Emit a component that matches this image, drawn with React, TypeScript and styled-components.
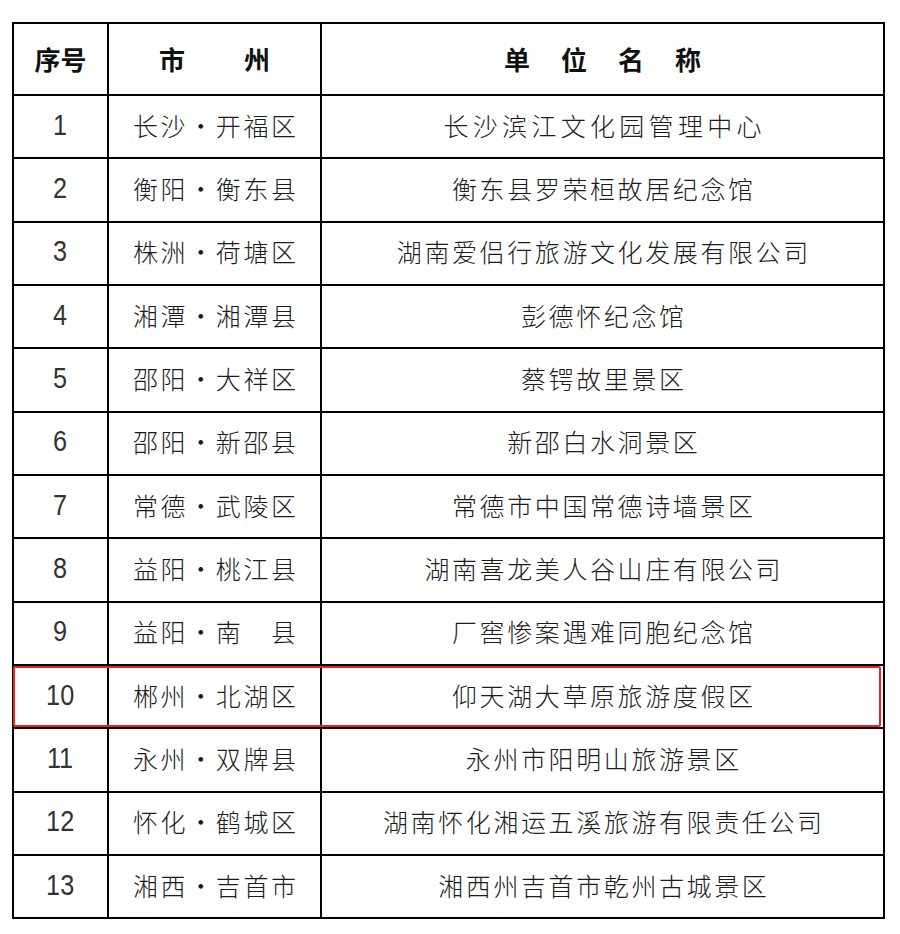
import { styled, createGlobalStyle } from "styled-components";

const rows = [
  { no: "1", city: "长沙·开福区", name: "长沙滨江文化园管理中心", wide: true },
  { no: "2", city: "衡阳·衡东县", name: "衡东县罗荣桓故居纪念馆" },
  { no: "3", city: "株洲·荷塘区", name: "湖南爱侣行旅游文化发展有限公司" },
  { no: "4", city: "湘潭·湘潭县", name: "彭德怀纪念馆" },
  { no: "5", city: "邵阳·大祥区", name: "蔡锷故里景区" },
  { no: "6", city: "邵阳·新邵县", name: "新邵白水洞景区" },
  { no: "7", city: "常德·武陵区", name: "常德市中国常德诗墙景区" },
  { no: "8", city: "益阳·桃江县", name: "湖南喜龙美人谷山庄有限公司" },
  { no: "9", city: "益阳·南　县", name: "厂窖惨案遇难同胞纪念馆" },
  { no: "10", city: "郴州·北湖区", name: "仰天湖大草原旅游度假区", marked: true },
  { no: "11", city: "永州·双牌县", name: "永州市阳明山旅游景区" },
  { no: "12", city: "怀化·鹤城区", name: "湖南怀化湘运五溪旅游有限责任公司" },
  { no: "13", city: "湘西·吉首市", name: "湘西州吉首市乾州古城景区" },
];

const App = () => {
  return (
    <Page>
      <GlobalStyle />
      <Table>
        <HeaderRow>
          <HeadCell>序号</HeadCell>
          <HeadCell $spacing={59}>市州</HeadCell>
          <HeadCell $spacing={31}>单位名称</HeadCell>
        </HeaderRow>
        {rows.map((r) => (
          <Row key={r.no} $marked={r.marked}>
            <NumCell>
              <Num>{r.no}</Num>
            </NumCell>
            <TextCell>{r.city}</TextCell>
            <TextCell $spacing={r.wide ? 4.3 : 2.6}>{r.name}</TextCell>
          </Row>
        ))}
      </Table>
    </Page>
  );
};

export default App;

const GlobalStyle = createGlobalStyle`
  body {
    margin: 0;
    background: #ffffff;
    font-family: "Noto Sans CJK SC", "Liberation Sans", sans-serif;
  }
`;

const Page = styled.div`
  width: 900px;
  height: 934px;
  padding: 22px 0 0 12px;
  box-sizing: border-box;
  background: #ffffff;
`;

const Table = styled.div`
  width: 873px;
  box-sizing: border-box;
  border: 2px solid #000;
`;

const HeaderRow = styled.div`
  display: grid;
  grid-template-columns: 93px 213px 1fr;
  height: 70px;
`;

const Row = styled.div<{ $marked?: boolean }>`
  position: relative;
  display: grid;
  grid-template-columns: 93px 213px 1fr;
  height: 63.33px;
  box-sizing: border-box;
  border-top: 2px solid #000;

  &::after {
    content: "";
    display: ${(p) => (p.$marked ? "block" : "none")};
    position: absolute;
    top: 0;
    bottom: 0;
    left: -1px;
    right: 2px;
    border: 2.5px solid #f0201c;
    border-radius: 2px;
    pointer-events: none;
  }
`;

const Cell = styled.div`
  display: flex;
  align-items: center;
  justify-content: center;
  box-sizing: border-box;
  white-space: nowrap;
  padding-bottom: 4px;
  & + & {
    border-left: 2px solid #000;
  }
`;

const HeadCell = styled(Cell)<{ $spacing?: number }>`
  font-size: 26px;
  font-weight: 700;
  color: #111;
  letter-spacing: ${(p) => p.$spacing ?? 0}px;
  padding-left: ${(p) => p.$spacing ?? 0}px;
  padding-bottom: 2px;
`;

const NumCell = styled(Cell)`
  padding-bottom: 3px;
`;

const Num = styled.span`
  display: inline-block;
  font-family: "Liberation Sans", Arial, sans-serif;
  font-size: 29px;
  color: #333;
  transform: scaleX(0.87);
`;

const TextCell = styled(Cell)<{ $spacing?: number }>`
  font-size: 25px;
  font-weight: 300;
  color: #1c1c1c;
  letter-spacing: ${(p) => p.$spacing ?? 2.6}px;
  padding-left: ${(p) => p.$spacing ?? 2.6}px;
`;
